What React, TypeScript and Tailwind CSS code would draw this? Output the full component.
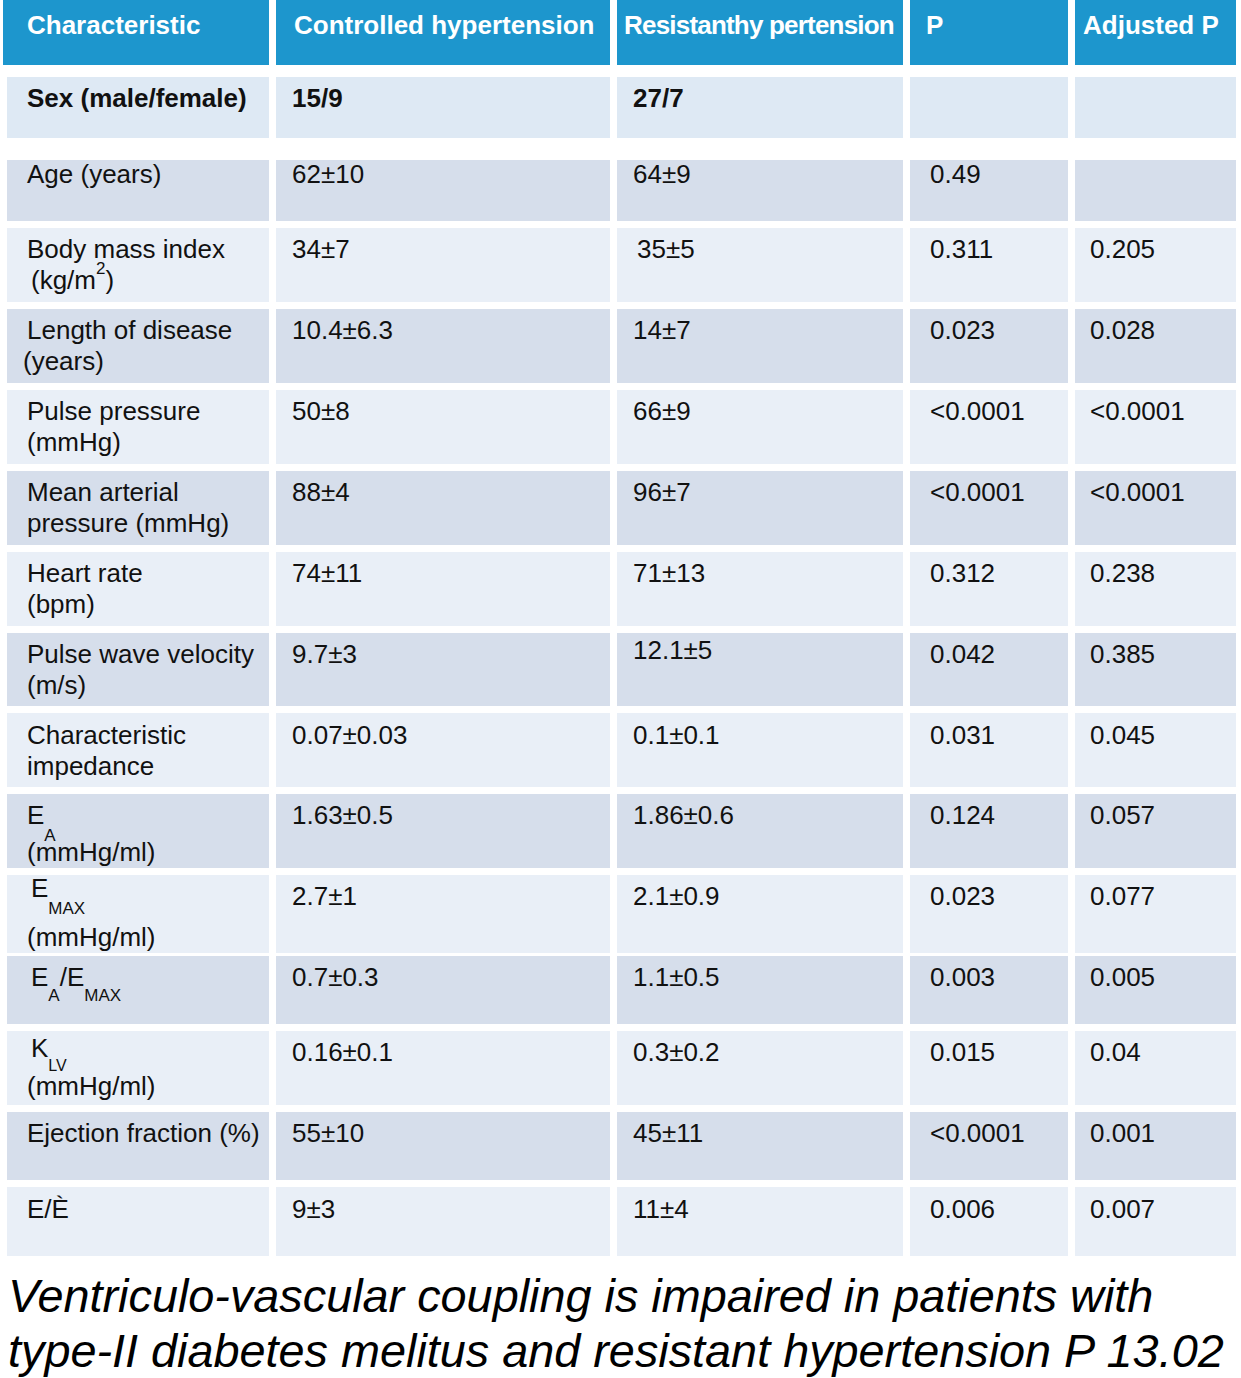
import type { ReactNode } from 'react';

type Row = {
  label: ReactNode;
  values: ReactNode[];
  height: string;
  tone: 'sex' | 'dark' | 'light';
  pt: string;
  bold?: boolean;
  gapBefore?: string;
};

const tones = {
  sex: 'bg-[#dee9f4]',
  dark: 'bg-[#d6deeb]',
  light: 'bg-[#e9eff7]',
};

const Sub = ({ children, top, size = 'text-[17px]' }: { children: ReactNode; top: string; size?: string }) => (
  <span className={`relative ${size} ${top}`}>{children}</span>
);

const rows: Row[] = [
  {
    label: 'Sex (male/female)',
    values: ['15/9', '27/7', '', ''],
    height: 'h-[61px]',
    tone: 'sex',
    pt: 'pt-[6px]',
    bold: true,
    gapBefore: 'mt-[12px]',
  },
  {
    label: 'Age (years)',
    values: ['62±10', '64±9', '0.49', ''],
    height: 'h-[61px]',
    tone: 'dark',
    pt: 'pt-0 leading-[28px]',
    gapBefore: 'mt-[22px]',
  },
  {
    label: (
      <>
        <div>Body mass index</div>
        <div className="ml-[4px]">
          (kg/m<Sub top="-top-[15px]">2</Sub>)
        </div>
      </>
    ),
    values: ['34±7', <span className="ml-[4px]">35±5</span>, '0.311', '0.205'],
    height: 'h-[74px]',
    tone: 'light',
    pt: 'pt-[6px]',
  },
  {
    label: (
      <>
        <div>Length of disease</div>
        <div className="-ml-[4px]">(years)</div>
      </>
    ),
    values: ['10.4±6.3', '14±7', '0.023', '0.028'],
    height: 'h-[74px]',
    tone: 'dark',
    pt: 'pt-[6px]',
  },
  {
    label: (
      <>
        <div>Pulse pressure</div>
        <div>(mmHg)</div>
      </>
    ),
    values: ['50±8', '66±9', '<0.0001', '<0.0001'],
    height: 'h-[74px]',
    tone: 'light',
    pt: 'pt-[6px]',
  },
  {
    label: (
      <>
        <div>Mean arterial</div>
        <div>pressure (mmHg)</div>
      </>
    ),
    values: ['88±4', '96±7', '<0.0001', '<0.0001'],
    height: 'h-[74px]',
    tone: 'dark',
    pt: 'pt-[6px]',
  },
  {
    label: (
      <>
        <div>Heart rate</div>
        <div>(bpm)</div>
      </>
    ),
    values: ['74±11', '71±13', '0.312', '0.238'],
    height: 'h-[74px]',
    tone: 'light',
    pt: 'pt-[6px]',
  },
  {
    label: (
      <>
        <div>Pulse wave velocity</div>
        <div>(m/s)</div>
      </>
    ),
    values: ['9.7±3', <span className="relative -top-[4px]">12.1±5</span>, '0.042', '0.385'],
    height: 'h-[73px]',
    tone: 'dark',
    pt: 'pt-[6px]',
  },
  {
    label: (
      <>
        <div>Characteristic</div>
        <div>impedance</div>
      </>
    ),
    values: ['0.07±0.03', '0.1±0.1', '0.031', '0.045'],
    height: 'h-[74px]',
    tone: 'light',
    pt: 'pt-[7px]',
  },
  {
    label: (
      <>
        <div>
          E<Sub top="top-[17px]">A</Sub>
        </div>
        <div className="mt-[3px]">(mmHg/ml)</div>
      </>
    ),
    values: ['1.63±0.5', '1.86±0.6', '0.124', '0.057'],
    height: 'h-[74px]',
    tone: 'dark',
    pt: 'pt-[6px]',
  },
  {
    label: (
      <>
        <div className="ml-[4px] -mt-[8px]">
          E<Sub top="top-[17px]">MAX</Sub>
        </div>
        <div className="mt-[15px]">(mmHg/ml)</div>
      </>
    ),
    values: ['2.7±1', '2.1±0.9', '0.023', '0.077'],
    height: 'h-[74px]',
    tone: 'light',
    pt: 'pt-[6px]',
  },
  {
    label: (
      <div className="ml-[4px]">
        E<Sub top="top-[15px]">A</Sub>/E<Sub top="top-[15px]">MAX</Sub>
      </div>
    ),
    values: ['0.7±0.3', '1.1±0.5', '0.003', '0.005'],
    height: 'h-[68px]',
    tone: 'dark',
    pt: 'pt-[6px]',
  },
  {
    label: (
      <>
        <div className="ml-[4px] -mt-[4px]">
          K<Sub top="top-[14px]" size="text-[16px]">LV</Sub>
        </div>
        <div className="mt-[4px]">(mmHg/ml)</div>
      </>
    ),
    values: ['0.16±0.1', '0.3±0.2', '0.015', '0.04'],
    height: 'h-[74px]',
    tone: 'light',
    pt: 'pt-[6px]',
  },
  {
    label: 'Ejection fraction (%)',
    values: ['55±10', '45±11', '<0.0001', '0.001'],
    height: 'h-[68px]',
    tone: 'dark',
    pt: 'pt-[6px]',
  },
  {
    label: 'E/È',
    values: ['9±3', '11±4', '0.006', '0.007'],
    height: 'h-[69px]',
    tone: 'light',
    pt: 'pt-[7px]',
  },
];

const cols = 'grid grid-cols-[266px_334px_286px_158px_161px] gap-x-[7px]';
const valuePad = ['pl-[16px]', 'pl-[16px]', 'pl-[20px]', 'pl-[15px]'];

export default function App() {
  return (
    <div className="w-[1241px] h-[1378px] bg-white pl-[3px] font-['Liberation_Sans',Arial,sans-serif] text-[26px] leading-[31px] text-[#111]">
      <div className={`${cols} h-[65px] font-bold text-white`}>
        <div className="bg-[#1d96cd] pl-[24px] pt-[10px]">Characteristic</div>
        <div className="bg-[#1d96cd] pl-[18px] pt-[10px]">Controlled hypertension</div>
        <div className="bg-[#1d96cd] pl-[7px] pt-[10px] whitespace-nowrap tracking-[-0.8px]">Resistanthy pertension</div>
        <div className="bg-[#1d96cd] pl-[16px] pt-[10px]">P</div>
        <div className="bg-[#1d96cd] pl-[8px] pt-[10px]">Adjusted P</div>
      </div>

      <div className="flex flex-col">
        {rows.map((row, i) => (
          <div
            key={i}
            className={`${cols} ${row.height} ${row.gapBefore ?? 'mt-[7px]'} ${row.bold ? 'font-bold' : ''}`}
          >
            <div className={`${tones[row.tone]} ml-[4px] pl-[20px] ${row.pt} whitespace-nowrap`}>{row.label}</div>
            {row.values.map((v, j) => (
              <div key={j} className={`${tones[row.tone]} ${valuePad[j]} ${row.pt}`}>
                {v}
              </div>
            ))}
          </div>
        ))}
      </div>

      <p className="mt-[13px] pl-[5px] italic text-[46.8px] leading-[55px] text-black">
        Ventriculo-vascular coupling is impaired in patients with
        <br />
        type-II diabetes melitus and resistant hypertension P 13.02
      </p>
    </div>
  );
}
